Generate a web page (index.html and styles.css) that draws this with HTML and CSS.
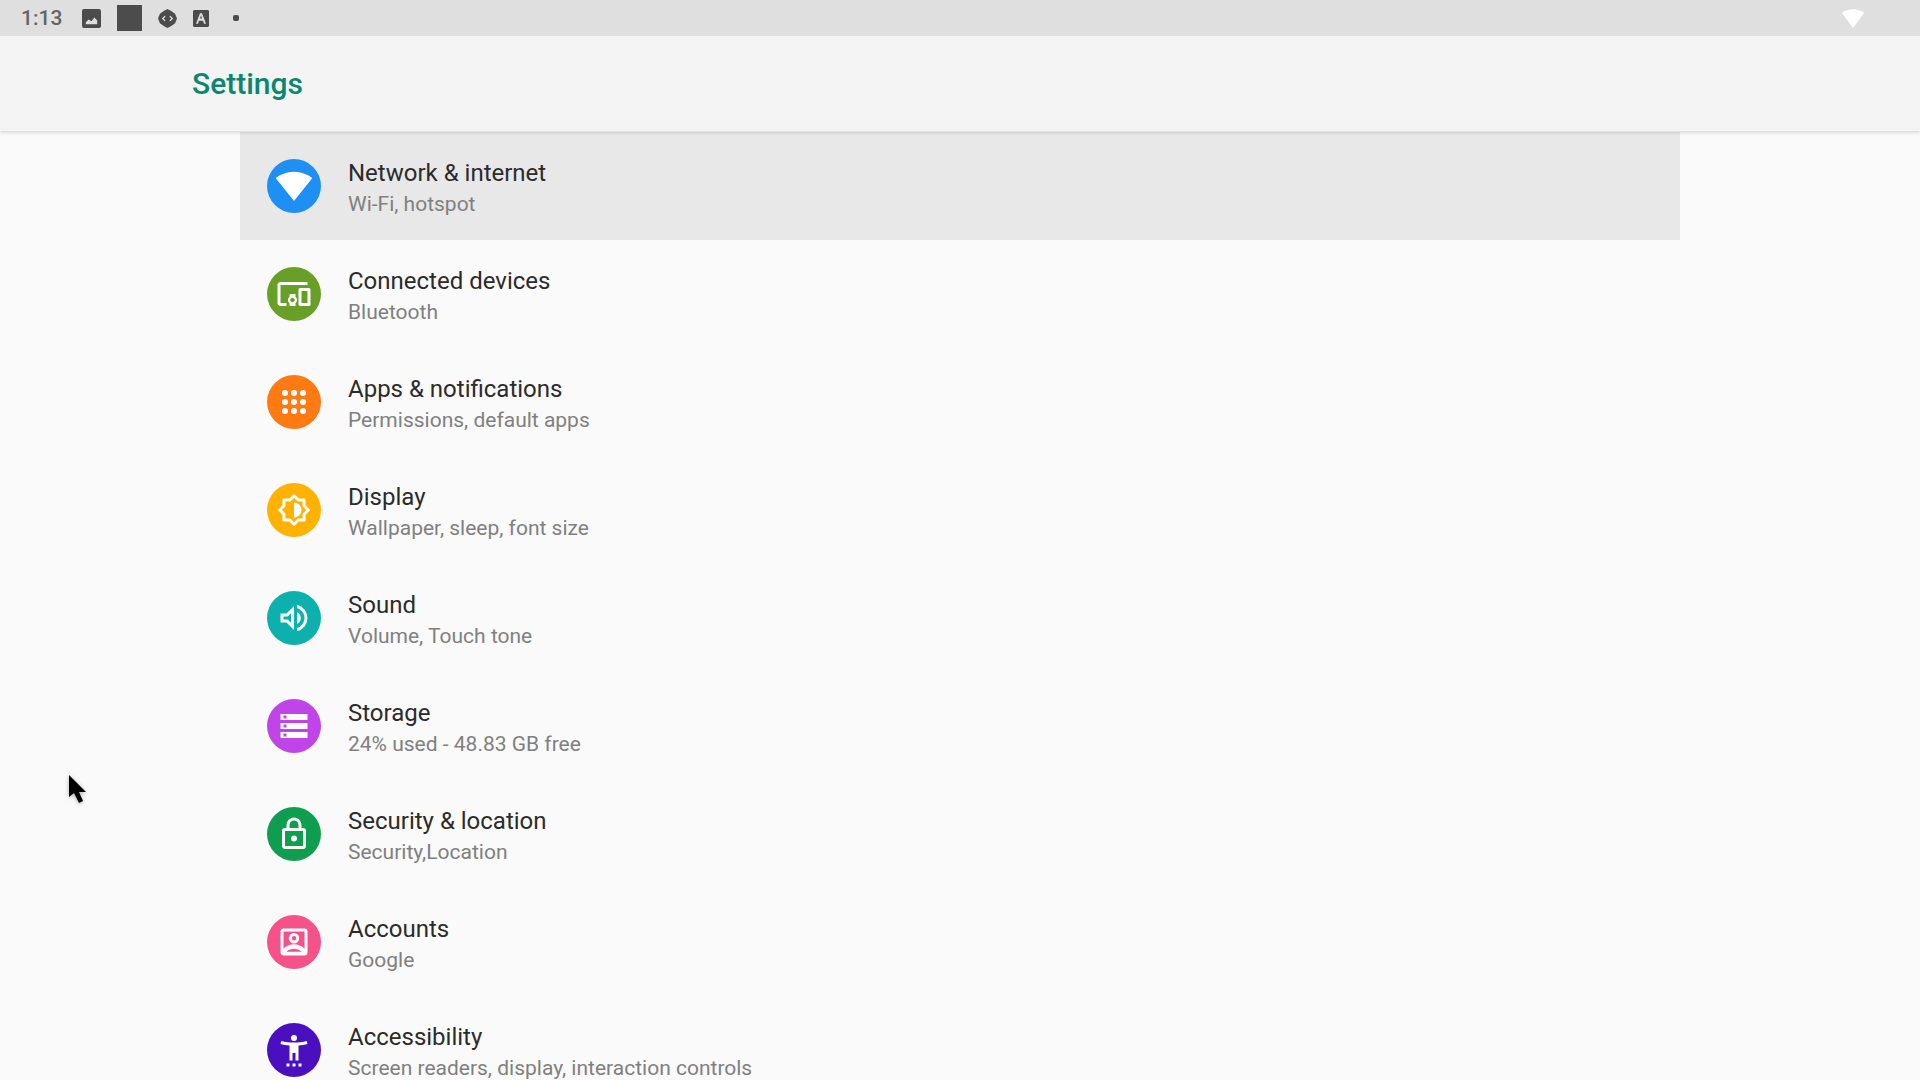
FILE: index.html
```html
<!DOCTYPE html>
<html lang="en">
<head>
<meta charset="utf-8">
<meta name="viewport" content="width=device-width, initial-scale=1">
<title>Settings</title>
<link rel="stylesheet" href="styles.css">
</head>
<body>
<div class="status-bar">
  <time class="clock">1:13</time>
  <div class="notifications">
    <svg width="19" height="19" viewBox="0 0 20 20" aria-hidden="true"><path fill-rule="evenodd" d="M2 0h16a2 2 0 0 1 2 2v16a2 2 0 0 1-2 2H2a2 2 0 0 1-2-2V2a2 2 0 0 1 2-2zM4 16h12v-4l-3-3-3 4-3-2-3 3z"/></svg>
    <svg width="25" height="26" viewBox="0 0 25 26" aria-hidden="true"><path d="M0 0h25v26H0z"/></svg>
    <svg width="19" height="19" viewBox="0 0 20 20" aria-hidden="true"><path fill-rule="evenodd" d="M10 0l4 2 4 3 2 5-2 5-4 3-4 2-4-2-4-3-2-5 2-5 4-3zM7 7l-3 3 3 3 1-1-2-2 2-2zM13 7l-1 1 2 2-2 2 1 1 3-3z"/></svg>
    <svg width="16" height="17" viewBox="0 0 16 16" preserveAspectRatio="none" aria-hidden="true"><path fill-rule="evenodd" d="M1 0h14l1 1v14l-1 1H1l-1-1V1zM7 3l-4 10h2l1-3h4l1 3h2L9 3zM7 8l1-3 1 3z"/></svg>
    <span class="more-dot"></span>
  </div>
  <svg class="signal" width="22" height="19" viewBox="0 0 22 19" aria-label="Wi-Fi connected"><path d="M0 4C6-1 16-1 22 4L11 19z"/></svg>
</div>
<header class="app-bar"><h1 class="app-title">Settings</h1></header>
<main class="content">
  <nav class="settings-list" aria-label="Settings">
    <a class="row selected" href="#network">
      <span class="icon blue"><svg class="large" viewBox="0 0 24 24"><path d="M12 21.500L23.600 7C23.200 6.700 18.700 3 12 3S.8 6.700.4 7z"/></svg></span>
      <span class="text"><span class="title">Network &amp; internet</span><span class="summary">Wi-Fi, hotspot</span></span>
    </a>
    <a class="row" href="#devices">
      <span class="icon green"><svg viewBox="0 0 24 24"><path d="M3 6h18V4H3c-1.100 0-2 .9-2 2v12c0 1.100.9 2 2 2h4v-2H3V6zm10 6H9v1.780c-.61.550-1 1.330-1 2.220s.39 1.670 1 2.220V20h4v-1.780c.61-.550 1-1.340 1-2.220s-.39-1.670-1-2.220V12zm-2 5.500c-.83 0-1.500-.67-1.500-1.500s.67-1.500 1.500-1.500 1.500.67 1.500 1.500-.67 1.500-1.500 1.500zM22 8h-6c-.5 0-1 .5-1 1v10c0 .5.5 1 1 1h6c.5 0 1-.5 1-1V9c0-.5-.5-1-1-1zm-1 10h-4v-8h4v8z"/></svg></span>
      <span class="text"><span class="title">Connected devices</span><span class="summary">Bluetooth</span></span>
    </a>
    <a class="row" href="#apps">
      <span class="icon orange"><svg viewBox="0 0 24 24"><g><circle cx="6" cy="6" r="2"/><circle cx="12" cy="6" r="2"/><circle cx="18" cy="6" r="2"/><circle cx="6" cy="12" r="2"/><circle cx="12" cy="12" r="2"/><circle cx="18" cy="12" r="2"/><circle cx="6" cy="18" r="2"/><circle cx="12" cy="18" r="2"/><circle cx="18" cy="18" r="2"/></g></svg></span>
      <span class="text"><span class="title">Apps &amp; notifications</span><span class="summary">Permissions, default apps</span></span>
    </a>
    <a class="row" href="#display">
      <span class="icon amber"><svg viewBox="0 0 24 24"><path d="M12 2.500L14.800 5.300H18.700V9.200L21.500 12L18.700 14.800V18.700H14.800L12 21.500L9.200 18.700H5.300V14.800L2.500 12L5.300 9.200V5.300H9.200Z" fill="none" stroke="#fff" stroke-width="2" stroke-linejoin="round"/><path d="M12 7v10a5 5 0 0 0 0-10z"/></svg></span>
      <span class="text"><span class="title">Display</span><span class="summary">Wallpaper, sleep, font size</span></span>
    </a>
    <a class="row" href="#sound">
      <span class="icon teal"><svg viewBox="0 0 24 24"><path d="M3 9v6h4l5 5V4L7 9H3zm7-.17v6.340L7.830 13H5v-2h2.830L10 8.830zM16.500 12A4.500 4.500 0 0 0 14 7.970v8.050A4.470 4.470 0 0 0 16.500 12zM14 3.230v2.060a7 7 0 0 1 0 13.420v2.060a9 9 0 0 0 0-17.540z"/></svg></span>
      <span class="text"><span class="title">Sound</span><span class="summary">Volume, Touch tone</span></span>
    </a>
    <a class="row" href="#storage">
      <span class="icon purple"><svg viewBox="0 0 24 24"><path fill-rule="evenodd" d="M3 16h18v4H3zM5 17v2h2v-2zM3 4h18v4H3zM5 5v2h2V5zM3 10h18v4H3zM5 11v2h2v-2z"/></svg></span>
      <span class="text"><span class="title">Storage</span><span class="summary">24% used - 48.83 GB free</span></span>
    </a>
    <a class="row" href="#security">
      <span class="icon emerald"><svg viewBox="0 0 24 24"><path fill-rule="evenodd" d="M18 8h-1V6A5 5 0 0 0 7 6v2H6a2 2 0 0 0-2 2v10c0 1.100.9 2 2 2h12a2 2 0 0 0 2-2V10a2 2 0 0 0-2-2zM9 6a3 3 0 0 1 6 0v2H9zM6 10h12v10H6z"/><circle cx="12" cy="15" r="2"/></svg></span>
      <span class="text"><span class="title">Security &amp; location</span><span class="summary">Security,Location</span></span>
    </a>
    <a class="row" href="#accounts">
      <span class="icon pink"><svg viewBox="0 0 24 24"><path fill-rule="evenodd" d="M19 3H5a2 2 0 0 0-2 2v14c0 1.100.9 2 2 2h14a2 2 0 0 0 2-2V5a2 2 0 0 0-2-2zM5 5h14v11.500C17.500 14.600 14.500 13.500 12 13.500S6.500 14.600 5 16.500zM7 18.500c1.500-1.500 3.300-2 5-2s3.500.5 5 2z"/><path fill-rule="evenodd" d="M12 6a3.500 3.500 0 1 0 0 7 3.500 3.500 0 0 0 0-7zm0 2a1.500 1.500 0 1 1 0 3 1.500 1.500 0 0 1 0-3z"/></svg></span>
      <span class="text"><span class="title">Accounts</span><span class="summary">Google</span></span>
    </a>
    <a class="row" href="#accessibility">
      <span class="icon indigo"><svg viewBox="0 0 24 24"><path d="M20.500 6c-2.610.7-5.670 1-8.500 1s-5.890-.3-8.500-1L3 8c1.860.5 4 .83 6 1v10h2v-5h2v5h2V9c2-.17 4.140-.5 6-1l-.5-2zM12 6a2 2 0 1 0 0-4 2 2 0 0 0 0 4zM7 21h2v2H7zm4 0h2v2h-2zm4 0h2v2h-2z"/></svg></span>
      <span class="text"><span class="title">Accessibility</span><span class="summary">Screen readers, display, interaction controls</span></span>
    </a>
  </nav>
</main>
<svg class="pointer" width="18" height="30" viewBox="0 0 18 30" aria-hidden="true"><path d="M0 0v22l5-4 5 10 4-2-4-9h7z"/></svg>
</body>
</html>
```
FILE: styles.css
```css
* {
  box-sizing: border-box;
}

body {
  display: flex;
  flex-direction: column;
  height: 100vh;
  margin: 0;
  overflow: hidden;
  background: #fafafa;
  color: #2b2b2b;
  font-family: Roboto, "Liberation Sans", sans-serif;
}

.status-bar {
  display: flex;
  flex: none;
  align-items: center;
  gap: 20px;
  height: 36px;
  padding: 0 56px 0 21px;
  background: #dfdfdf;
}

.clock {
  color: #646464;
  font-size: 21px;
  font-weight: 500;
}

.notifications {
  display: flex;
  align-items: center;
  gap: 16px;
  fill: #4c4c4c;
}

.more-dot {
  width: 6px;
  height: 6px;
  margin-left: 8px;
  border-radius: 2px;
  background: #4c4c4c;
}

.signal {
  margin-left: auto;
  fill: #fff;
}

.app-bar {
  z-index: 1;
  display: flex;
  flex: none;
  align-items: center;
  height: 95px;
  padding: 0 10%;
  background: #f4f4f4;
  box-shadow: 0 2px 3px rgba(0, 0, 0, 0.12);
}

.app-title {
  margin: 0;
  color: #0b8670;
  font-size: 30px;
  font-weight: 500;
}

.content {
  flex: 1;
  min-height: 0;
  padding: 1px 12.5% 0;
  overflow-y: auto;
  scrollbar-width: none;
}

.row {
  display: flex;
  align-items: center;
  gap: 27px;
  height: 108px;
  padding: 0 27px;
  color: inherit;
  text-decoration: none;
}

.selected {
  background: #e8e8e8;
}

.icon {
  display: grid;
  flex: none;
  place-items: center;
  width: 54px;
  height: 54px;
  border-radius: 50%;
  fill: #fff;
}

.icon svg {
  width: 36px;
  height: 36px;
}

.icon .large {
  width: 38px;
  height: 38px;
}

.blue { background: #1e90f5; }
.green { background: #689f26; }
.orange { background: #ff7a12; }
.amber { background: #ffb300; }
.teal { background: #0cb0ad; }
.purple { background: #c045e8; }
.emerald { background: #0f9d4f; }
.pink { background: #f5528a; }
.indigo { background: #4a10c0; }

.text {
  display: flex;
  flex-direction: column;
  padding-top: 6px;
}

.title,
.summary {
  line-height: 31px;
}

.title {
  font-size: 24px;
}

.summary {
  color: #808080;
  font-size: 21px;
}

.pointer {
  position: absolute;
  top: 775px;
  left: 69px;
  z-index: 2;
  filter: drop-shadow(0 1px 2px rgba(0, 0, 0, 0.3));
  pointer-events: none;
}
```
